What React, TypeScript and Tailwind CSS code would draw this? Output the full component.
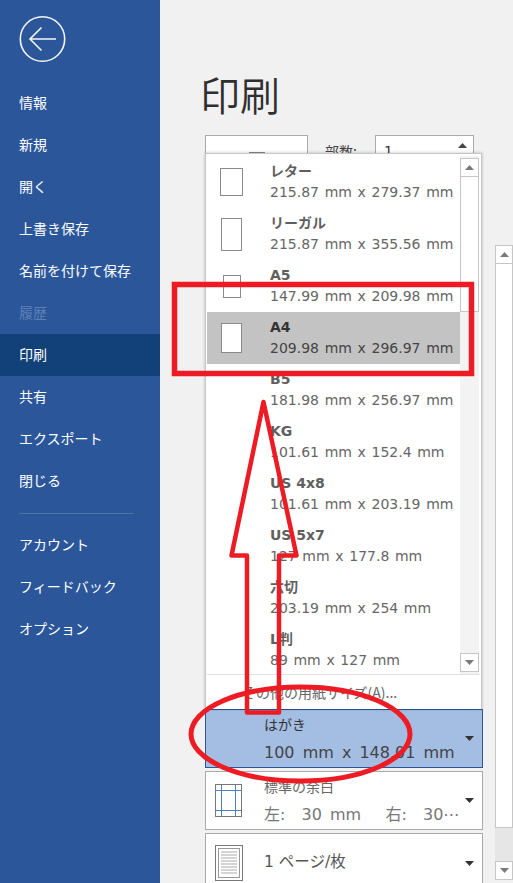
const nav = [
  { t: "情報" },
  { t: "新規" },
  { t: "開く" },
  { t: "上書き保存" },
  { t: "名前を付けて保存" },
  { t: "履歴", off: true },
  { t: "印刷", on: true },
  { t: "共有" },
  { t: "エクスポート" },
  { t: "閉じる" },
];
const nav2 = ["アカウント", "フィードバック", "オプション"];

const sizes = [
  { t: "レター", d: "215.87 mm x 279.37 mm", w: "w-[23px]", h: "h-[28px]" },
  { t: "リーガル", d: "215.87 mm x 355.56 mm", w: "w-[21px]", h: "h-[33px]" },
  { t: "A5", d: "147.99 mm x 209.98 mm", w: "w-[18px]", h: "h-[23px]" },
  { t: "A4", d: "209.98 mm x 296.97 mm", w: "w-[21px]", h: "h-[30px]", sel: true },
  { t: "B5", d: "181.98 mm x 256.97 mm" },
  { t: "KG", d: "101.61 mm x 152.4 mm" },
  { t: "US 4x8", d: "101.61 mm x 203.19 mm" },
  { t: "US 5x7", d: "127 mm x 177.8 mm" },
  { t: "六切", d: "203.19 mm x 254 mm" },
  { t: "L判", d: "89 mm x 127 mm" },
];

function Up({ c = "fill-[#7a7a7a]" }: { c?: string }) {
  return (
    <svg width="9" height="5" viewBox="0 0 9 5" className={c}>
      <path d="M4.5 0L9 5H0z" />
    </svg>
  );
}
function Down({ c = "fill-[#7a7a7a]" }: { c?: string }) {
  return (
    <svg width="9" height="5" viewBox="0 0 9 5" className={c}>
      <path d="M0 0h9L4.5 5z" />
    </svg>
  );
}

function SettingBox({
  active,
  icon,
  title,
  sub,
  mt,
}: {
  active?: boolean;
  icon?: React.ReactNode;
  title: string;
  sub?: string;
  mt: string;
}) {
  return (
    <div
      className={`${mt} h-[59px] shrink-0 flex items-center border ${
        active ? "bg-[#a3bde3] border-[#2b579a]" : "bg-white border-[#ababab]"
      }`}
    >
      <div className="w-[58px] shrink-0 flex justify-center pr-[13px]">{icon}</div>
      <div className="flex-1 min-w-0">
        <div className={`text-[14px] leading-[20px] ${active ? "text-[#333]" : "text-[#666]"}`}>{title}</div>
        {sub && (
          <div
            className={`text-[16px] [word-spacing:3px] leading-[20px] mt-[8px] whitespace-pre ${
              active ? "text-[#444]" : "text-[#777]"
            }`}
          >
            {sub}
          </div>
        )}
      </div>
      <div className="w-[19px] shrink-0 flex pl-[2px]">
        <Down c="fill-[#333]" />
      </div>
    </div>
  );
}

export default function App() {
  return (
    <div
      className="relative w-[513px] h-[883px] overflow-hidden flex bg-[#f1f1f1]"
      style={{ fontFamily: '"DejaVu Sans","Noto Sans CJK JP",sans-serif' }}
    >
      <aside
        className="w-[160px] shrink-0 bg-[#2b579a] text-white text-[14px] flex flex-col"
        style={{ fontFamily: '"Noto Sans CJK JP",sans-serif' }}
      >
        <div className="h-[82px] pl-[19px] pt-[15px] shrink-0">
          <svg width="48" height="48" viewBox="0 0 48 48" fill="none" stroke="#f2f4f8" strokeWidth="1.6">
            <circle cx="23.5" cy="24" r="22.2" />
            <path d="M11 24h26M22.5 12.5L11 24l11.5 11.5" />
          </svg>
        </div>
        {nav.map((n) => (
          <div
            key={n.t}
            className={`h-[42px] shrink-0 flex items-center ${n.on ? "bg-[#124078]" : ""} ${
              n.off ? "text-[#5d80b6]" : ""
            } pl-[19px] pb-[2px]`}
          >
            {n.t}
          </div>
        ))}
        <div className="mx-[19px] w-[115px] h-px bg-[#4a72ad] mt-[11px] mb-[10px] shrink-0" />
        {nav2.map((t) => (
          <div key={t} className="h-[42px] shrink-0 flex items-center pl-[19px] pb-[2px]">
            {t}
          </div>
        ))}
      </aside>

      <main className="flex-1 flex min-w-0">
        <div className="relative ml-[45px] w-[278px] shrink-0 flex flex-col">
          <h1
            className="mt-[66px] h-[56px] text-[40px] leading-[56px] text-[#2f2f2f] -ml-[5px]"
            style={{ fontFamily: '"Noto Sans CJK JP",sans-serif', fontWeight: 350 }}
          >
            印刷
          </h1>
          <div className="mt-[13px] flex h-[60px] shrink-0">
            <div className="w-[103px] border border-[#ababab] bg-white flex justify-center pt-[16px]">
              <div className="w-[16px] h-[2px] bg-[#888]" />
            </div>
            <div className="ml-[17px] pt-[6px] text-[14px] text-[#444]" style={{ fontFamily: '"Noto Sans CJK JP",sans-serif' }}>部数:</div>
            <div className="ml-[18px] w-[99px] h-[40px] border border-[#ababab] bg-white flex justify-between pl-[8px] pr-[6px] pt-[5px] text-[14px] text-[#333]">
              <span>1</span>
              <span className="pt-[2px]">
                <Up c="fill-[#444]" />
              </span>
            </div>
          </div>

          <div className="absolute left-0 top-[153px] w-[277px] h-[556px] bg-white border-x border-t border-[#c6c6c6] shadow-[0_0_3px_rgba(0,0,0,0.25)] flex flex-col z-10">
            <div className="flex-1 flex min-h-0 pt-[2px]">
              <div className="w-[254px] pl-[1px] shrink-0">
                {sizes.map((s) => (
                  <div key={s.t} className={`h-[52px] flex items-center ${s.sel ? "bg-[#c3c3c3]" : ""}`}>
                    <div className="w-[63px] shrink-0 flex justify-center pr-[14px]">
                      {s.w && <div className={`${s.w} ${s.h} bg-white border border-[#8a8a8a]`} />}
                    </div>
                    <div>
                      <div className={`text-[14px] font-bold leading-[21px] ${s.sel ? "text-[#333]" : "text-[#5f5f5f]"}`}>{s.t}</div>
                      <div className={`text-[14px] [word-spacing:1.2px] leading-[21px] whitespace-nowrap ${s.sel ? "text-[#444]" : "text-[#666]"}`}>{s.d}</div>
                    </div>
                  </div>
                ))}
              </div>
              <div className="w-[19px] flex flex-col pt-[2px] pb-[2px] bg-[#f3f3f3]">
                <div className="h-[19px] shrink-0 bg-white border border-[#c6c6c6] flex items-center justify-center">
                  <Up />
                </div>
                <div className="h-[135px] shrink-0 bg-white border border-[#c6c6c6] border-t-0" />
                <div className="flex-1" />
                <div className="h-[19px] shrink-0 bg-white border border-[#c6c6c6] flex items-center justify-center">
                  <Down />
                </div>
              </div>
            </div>
            <div className="h-[35px] shrink-0 mx-[1px] border-t border-[#e1e1e1] pl-[35px] flex items-center text-[14px] text-[#666] whitespace-nowrap" style={{ fontFamily: '"Noto Sans CJK JP",sans-serif' }}>
              その他の用紙サイズ(A)...
            </div>
          </div>

          <div className="flex-1 flex flex-col justify-end pb-0 overflow-hidden">
            <div className="mt-auto flex flex-col h-[174px] shrink-0">
              <SettingBox active title="はがき" sub="100 mm x 148.01 mm" mt="" icon={<span />} />
              <SettingBox
                mt="mt-[3px]"
                title="標準の余白"
                sub="左:  30 mm   右:  30⋯"
                icon={
                  <svg width="27" height="33" viewBox="0 0 27 33" fill="none">
                    <rect x=".5" y=".5" width="26" height="32" stroke="#777" fill="#fff" />
                    <path d="M6.5 1v31M20.5 1v31M1 6.5h25M1 26.5h25" stroke="#4f81bd" />
                  </svg>
                }
              />
              <div className="mt-[3px] h-[60px] shrink-0 flex items-center bg-white border border-[#ababab]">
                <div className="w-[58px] shrink-0 flex justify-center pr-[13px]">
                  <svg width="28" height="36" viewBox="0 0 28 36" fill="none">
                    <rect x=".5" y=".5" width="27" height="35" stroke="#777" />
                    <rect x="3.5" y="3.5" width="21" height="29" stroke="#999" />
                    <path d="M6 7h16M6 10h16M6 13h16M6 16h16M6 19h16M6 22h16M6 25h16M6 28h16" stroke="#aaa" />
                  </svg>
                </div>
                <div className="flex-1 text-[15.5px] text-[#555]">1 ページ/枚</div>
                <div className="w-[19px] flex pl-[2px]">
                  <Down c="fill-[#333]" />
                </div>
              </div>
            </div>
          </div>
        </div>

        <div className="ml-[12px] w-[18px] shrink-0 flex flex-col pt-[245px] pb-[3px]">
          <div className="h-[19px] shrink-0 bg-white border border-[#c6c6c6] flex items-center justify-center">
            <Up />
          </div>
          <div className="h-[564px] shrink-0 bg-white border-x border-b border-[#c6c6c6]" />
          <div className="flex-1 bg-[#e6e6e6]" />
          <div className="h-[19px] shrink-0 bg-white border border-[#c6c6c6] flex items-center justify-center">
            <Down />
          </div>
        </div>
      </main>

      <svg className="absolute left-0 top-0 z-20 pointer-events-none" width="513" height="883" fill="none" stroke="#ed1c24">
        <rect x="174.5" y="284.5" width="297" height="89" strokeWidth="5.5" />
        <path d="M263.5 402L231.5 555.5H247V712.5H279V555.5H296.5Z" strokeWidth="4.5" strokeLinejoin="round" />
        <ellipse cx="300.5" cy="734" rx="109.5" ry="47" strokeWidth="5" />
      </svg>
    </div>
  );
}
